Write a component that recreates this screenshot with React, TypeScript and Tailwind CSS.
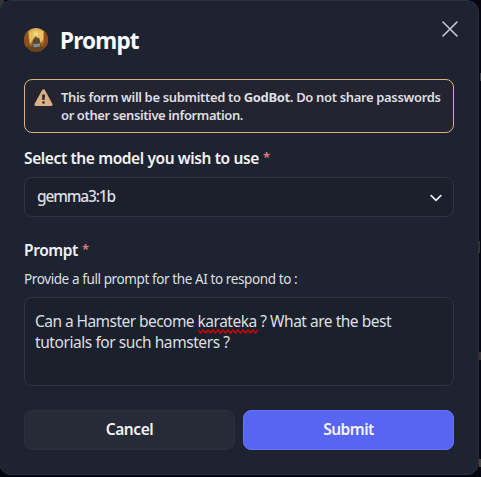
import React from "react";

function Avatar() {
  return (
    <svg className="h-6 w-6 shrink-0" viewBox="0 0 24 24">
      <defs>
        <clipPath id="disc"><circle cx="12" cy="12" r="12" /></clipPath>
        <radialGradient id="glow" cx="0.5" cy="0.25" r="0.75">
          <stop offset="0" stopColor="#fbe38c" />
          <stop offset="0.4" stopColor="#d29a40" />
          <stop offset="0.75" stopColor="#85501d" />
          <stop offset="1" stopColor="#4a2c1a" />
        </radialGradient>
        <filter id="soft"><feGaussianBlur stdDeviation="0.7" /></filter>
      </defs>
      <g clipPath="url(#disc)">
        <rect width="24" height="24" fill="url(#glow)" />
        <g filter="url(#soft)">
          <path d="M0 4 4 2 5 15 2 20H0Z" fill="#8b4f20" />
          <path d="M20 3h4v16h-4Z" fill="#8f4a1d" />
          <path d="M5 4h3l1 7-3 5Z" fill="#e9bb55" />
          <path d="M15 3h4l0 9-3 3Z" fill="#edc163" />
          <path d="M3 19h18l-3 5H6Z" fill="#6b431f" />
          <path d="M9 12 10.5 10 12 8 13 10 15 10 16 13 17 18 14 20 9 20 8 17Z" fill="#5c4630" />
          <path d="M8.5 16 16 15.5 16 18.5 10 19.5Z" fill="#7f8d8c" />
        </g>
      </g>
    </svg>
  );
}

function Warning() {
  return (
    <svg className="mt-[9px] h-[17px] w-[19px] shrink-0" viewBox="0 0 19 17">
      <path fillRule="evenodd" fill="#d9b184" d="M8 1.2a1.7 1.7 0 0 1 3 0l7.2 13.2A1.6 1.6 0 0 1 16.8 17H2.2a1.6 1.6 0 0 1-1.4-2.6ZM8.1 5.6 8.4 11h2.2l.3-5.4Z M9.5 12.2a1.3 1.3 0 1 0 0 2.6 1.3 1.3 0 0 0 0-2.6Z" />
    </svg>
  );
}

function Misspelled({ children }: { children: React.ReactNode }) {
  return (
    <span className="relative">
      {children}
      <svg className="absolute -bottom-[2px] left-0 h-[5px] w-[60px]" viewBox="0 0 60 5" fill="none" stroke="#e00000" strokeWidth="1.3">
        <path d="M0 1 2.5 4 5 1 7.5 4 10 1 12.5 4 15 1 17.5 4 20 1 22.5 4 25 1 27.5 4 30 1 32.5 4 35 1 37.5 4 40 1 42.5 4 45 1 47.5 4 50 1 52.5 4 55 1 57.5 4 60 1" />
      </svg>
    </span>
  );
}

export default function App() {
  return (
    <div className="relative h-[477px] w-[481px] overflow-hidden bg-[#05060f] font-['Noto_Sans','Open_Sans',sans-serif] text-[#dedfe2]">
      <div className="absolute top-0 left-0 h-2 w-1 bg-[#33343a]" />
      <div className="absolute top-[73px] right-0 h-2 w-px bg-[#3c3d40]" />
      <div className="absolute top-[241px] right-px h-3 w-px bg-[#34353b]" />
      <div className="absolute top-[352px] right-0 h-2 w-0.5 bg-[#34332f]" />
      <div className="absolute top-[459px] right-0 h-2 w-0.5 bg-[#45443f]" />
      <div className="relative -ml-px flex h-[475px] w-[480px] flex-col rounded-xl border border-[#2c303c] bg-[#1e2332] px-6">
        <header className="flex h-[78px] items-start justify-between">
          <div className="flex items-center gap-3 pt-[22px]">
            <Avatar />
            <h1 className="pt-0.5 text-[22.5px] leading-8 font-bold tracking-[-0.8px] whitespace-nowrap text-[#fbfbfb]">Prompt</h1>
          </div>
          <svg className="mt-5 -mr-[4px] h-4 w-4" viewBox="0 0 16 16" fill="none" stroke="#c8c9ce" strokeWidth="1.6" strokeLinecap="round">
            <path d="M1 1 15 15M15 1 1 15" />
          </svg>
        </header>

        <div className="flex h-[54px] gap-2 rounded-lg border border-[#d9b184] bg-[#242430] pl-[9px]">
          <Warning />
          <p className="pt-[8px] text-[13px] leading-[18px] font-semibold whitespace-nowrap">
            <span className="tracking-[-0.34px]">This form will be submitted to <b className="font-bold">GodBot.</b> Do not share passwords</span>
            <br />
            <span className="tracking-[-0.39px]">or other sensitive information.</span>
          </p>
        </div>

        <label className="mt-[13px] block h-6 text-[15.5px] leading-6 font-semibold whitespace-nowrap text-[#f3f3f4]">
          <span className="tracking-[-0.39px]">Select the model you wish to use</span> <span className="relative -top-0.5 text-[13px] text-[#e58080]">*</span>
        </label>
        <div className="mt-[7px] flex h-10 items-center justify-between rounded-lg border border-[#313541] bg-[#1b202d] pr-[11px] pl-3">
          <span className="-mt-0.5 text-[15.5px] leading-5 font-medium tracking-[-1.15px]">gemma3:1b</span>
          <svg className="mt-px h-3 w-3" viewBox="0 0 12 12" fill="none" stroke="#e8e8eb" strokeWidth="1.7" strokeLinecap="round" strokeLinejoin="round">
            <path d="m1.2 3.7 4.8 4.7 4.8-4.7" />
          </svg>
        </div>

        <label className="mt-[21px] block h-6 text-[15.5px] leading-6 font-semibold whitespace-nowrap text-[#f3f3f4]">
          <span className="tracking-[-0.4px]">Prompt</span> <span className="relative -top-0.5 text-[13px] text-[#e58080]">*</span>
        </label>
        <p className="mt-[7px] h-5 text-[13.5px] leading-5 tracking-[-0.4px] whitespace-nowrap">Provide a full prompt for the AI to respond to :</p>
        <div className="mt-2 h-[89px] rounded-lg border border-[#313541] bg-[#1b202d] px-[10px] pt-[13px] text-[15.5px] leading-[21px] whitespace-nowrap">
          <span className="tracking-[-0.48px]"><span className="tracking-[-0.55px]">Can a Hamster become </span><Misspelled>karateka</Misspelled> ? What are the best</span>
          <br />
          <span className="tracking-[-0.43px]">tutorials for such hamsters ?</span>
        </div>

        <div className="mt-6 grid grid-cols-2 gap-2 text-[15.5px] font-semibold text-[#f4f4f5]">
          <button className="h-10 rounded-lg border border-[#2d313c] bg-[#272b37] tracking-[-0.4px]">Cancel</button>
          <button className="h-10 rounded-lg border border-[#6974f5] bg-[#5865f2] tracking-[-0.5px]">Submit</button>
        </div>
      </div>
    </div>
  );
}
